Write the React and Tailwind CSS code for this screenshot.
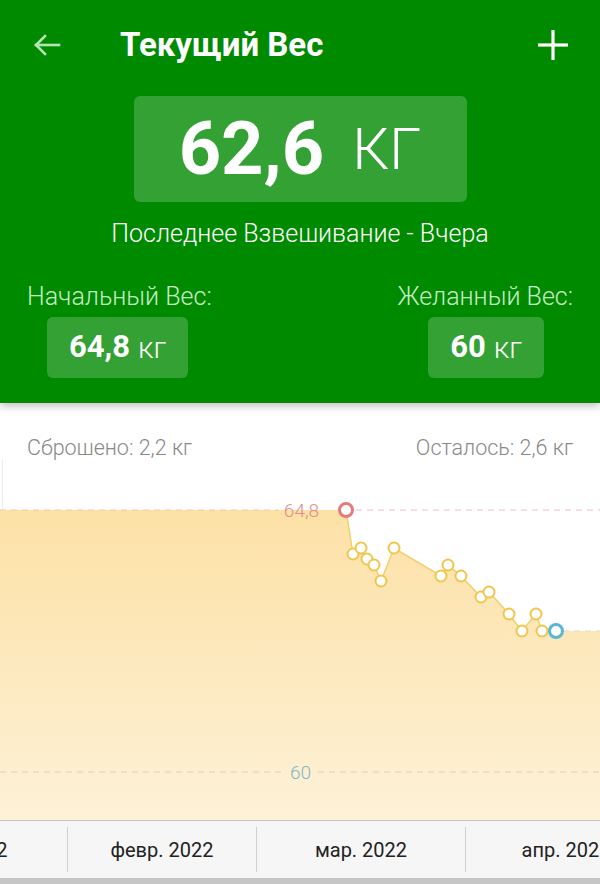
import React from "react";

const points = [
  [353, 94], [361, 88], [367, 99], [374, 105], [381, 121], [394, 88],
  [441, 116], [448, 105], [461, 116], [481, 137], [489, 132], [509, 154],
  [522, 171], [536, 154], [542, 171],
];

function Chart() {
  const line = [[346, 50], ...points, [556, 171]];
  const area =
    "M0 50 L" + line.map((p) => p.join(" ")).join(" L") + " L600 171 L600 360 L0 360 Z";
  const path = "M" + line.map((p) => p.join(" ")).join(" L");
  return (
    <svg width="600" height="360" viewBox="0 0 600 360" className="block">
      <defs>
        <linearGradient id="fill" x1="0" y1="50" x2="0" y2="360" gradientUnits="userSpaceOnUse">
          <stop offset="0" stopColor="#fde1a6" />
          <stop offset="1" stopColor="#fdf1d7" />
        </linearGradient>
      </defs>
      <line x1="2.5" y1="0" x2="2.5" y2="50" stroke="#ececec" strokeWidth="1" />
      <path d={area} fill="url(#fill)" />
      <line x1="0" y1="50" x2="279" y2="50" stroke="#f3c9a8" strokeWidth="1" strokeDasharray="6 5" />
      <line x1="356" y1="50" x2="600" y2="50" stroke="#f1c0c0" strokeWidth="1" strokeDasharray="6 5" />
      <line x1="563" y1="171" x2="600" y2="171" stroke="#e8d9bd" strokeWidth="1" strokeDasharray="6 5" />
      <line x1="0" y1="312" x2="284" y2="312" stroke="#d6d2c4" strokeWidth="1" strokeDasharray="6 5" />
      <line x1="318" y1="312" x2="600" y2="312" stroke="#d6d2c4" strokeWidth="1" strokeDasharray="6 5" />
      <path d={path} fill="none" stroke="#f3cf6a" strokeWidth="1.5" />
      <text x="301.5" y="56.5" textAnchor="middle" fontSize="19" fill="#e58a8a" fontFamily="Roboto, sans-serif" fontWeight="300">
        64,8
      </text>
      <text x="300.5" y="318.5" textAnchor="middle" fontSize="19" fill="#7db9cb" fontFamily="Roboto, sans-serif" fontWeight="300">
        60
      </text>
      {points.map(([x, y], i) => (
        <circle key={i} cx={x} cy={y} r="5.5" fill="#ffffff" stroke="#f0c64c" strokeWidth="2" />
      ))}
      <circle cx="346" cy="50" r="6.5" fill="#ffffff" stroke="#e77a7a" strokeWidth="3" />
      <circle cx="556" cy="171" r="6.5" fill="#ffffff" stroke="#5ab7d4" strokeWidth="3" />
    </svg>
  );
}

function SmallBox({ value }) {
  return (
    <div className="flex h-[61px] items-center rounded-md bg-[#33a133] px-[22px] text-white">
      <span className="text-[31px] font-bold">{value}</span>
      <span className="ml-[8px] text-[30px] font-light">кг</span>
    </div>
  );
}

export default function App() {
  return (
    <div className="h-[884px] w-[600px] overflow-hidden bg-white font-['Roboto',sans-serif]">
      <header className="relative z-10 h-[403px] bg-[#008a00] shadow-[0_3px_8px_rgba(0,0,0,0.25)]">
        <div className="flex h-[90px] items-center pl-[33px] pr-[31px]">
          <svg width="28" height="24" viewBox="0 0 28 24" fill="none" stroke="#b3e6b3" strokeWidth="2.6" strokeLinecap="square">
            <path d="M3 12 H26" />
            <path d="M12 3 L3 12 L12 21" />
          </svg>
          <h1 className="ml-[59px] text-[33px] font-bold text-white">Текущий Вес</h1>
          <div className="flex-1" />
          <svg width="32" height="32" viewBox="0 0 32 32" stroke="#ffffff" strokeWidth="3.2">
            <path d="M16 1 V31" />
            <path d="M1 16 H31" />
          </svg>
        </div>
        <div className="flex flex-col items-center">
          <div className="mt-[6px] flex h-[106px] w-[333px] items-center justify-center rounded-md bg-[#33a133] text-white">
            <span className="text-[74px] font-bold leading-none">62,6</span>
            <span className="ml-[28px] text-[58px] font-light leading-none">КГ</span>
          </div>
          <p className="mt-[13px] text-[25px] font-light text-white">Последнее Взвешивание - Вчера</p>
        </div>
        <div className="mt-[30px] flex justify-between px-[27px]">
          <div className="flex flex-col items-start">
            <span className="text-[25px] font-light leading-[28px] text-[#c6ecc6]">Начальный Вес:</span>
            <div className="ml-[20px] mt-[6px]">
              <SmallBox value="64,8" />
            </div>
          </div>
          <div className="flex flex-col items-end">
            <span className="text-[25px] font-light leading-[28px] text-[#c6ecc6]">Желанный Вес:</span>
            <div className="mr-[29px] mt-[6px]">
              <SmallBox value="60" />
            </div>
          </div>
        </div>
      </header>
      <div className="flex h-[57px] items-end justify-between px-[27px] pb-0 text-[21.5px] font-light leading-[24px] text-[#888888]">
        <span>Сброшено: 2,2 кг</span>
        <span>Осталось: 2,6 кг</span>
      </div>
      <Chart />
      <div className="flex h-[58px] overflow-hidden border-t border-[#c4c4c4] bg-[#f6f6f6] text-[20px] text-[#222222]">
        <div className="ml-[-141px] flex shrink-0">
          <div className="my-[6px] flex w-[209px] shrink-0 items-center justify-center border-r border-[#d0d0d0]">янв. 2022</div>
          <div className="my-[6px] flex w-[189px] shrink-0 items-center justify-center border-r border-[#d0d0d0]">февр. 2022</div>
          <div className="my-[6px] flex w-[209px] shrink-0 items-center justify-center border-r border-[#d0d0d0]">мар. 2022</div>
          <div className="my-[6px] flex w-[212px] shrink-0 items-center justify-center pr-[12px]">апр. 2022</div>
        </div>
      </div>
      <div className="h-[6px] bg-[#c6c6c6]" />
    </div>
  );
}
